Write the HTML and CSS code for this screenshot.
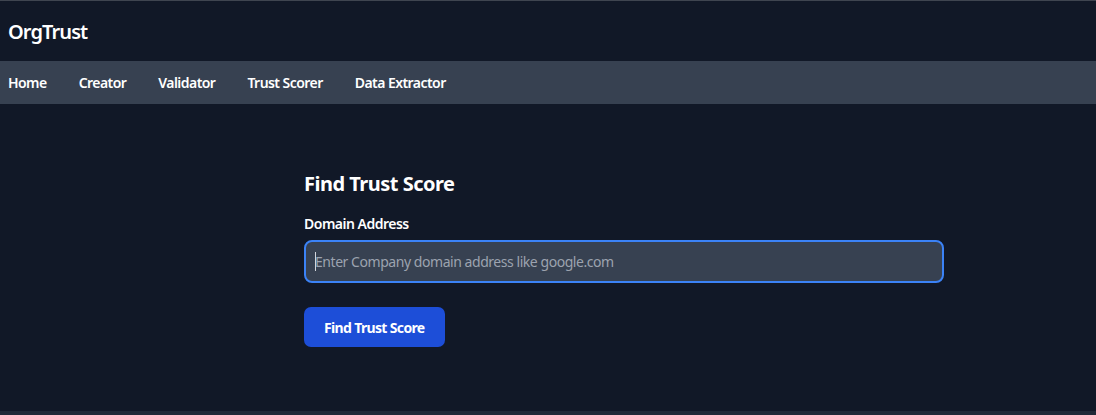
FILE: index.html
```html
<!DOCTYPE html>
<html lang="en">
<head>
<meta charset="utf-8">
<title>OrgTrust</title>
<link rel="stylesheet" href="styles.css">
</head>
<body>
<header class="topbar">
  <div class="brand">OrgTrust</div>
</header>
<nav class="nav">
  <a class="nav-link" href="#">Home</a>
  <a class="nav-link" href="#">Creator</a>
  <a class="nav-link" href="#">Validator</a>
  <a class="nav-link" href="#">Trust Scorer</a>
  <a class="nav-link" href="#">Data Extractor</a>
</nav>
<main class="main">
  <form class="form">
    <h2 class="title">Find Trust Score</h2>
    <label class="label" for="domain">Domain Address</label>
    <div class="field">
      <input class="input" id="domain" type="text" placeholder="Enter Company domain address like google.com">
    </div>
    <button class="btn" type="button">Find Trust Score</button>
  </form>
</main>
<footer class="footer"></footer>
</body>
</html>
```

FILE: styles.css
```css
* { box-sizing: border-box; }
html, body { margin: 0; padding: 0; }
body {
  background: #111827;
  color: #fff;
  font-family: "Noto Sans", "Open Sans", sans-serif;
  height: 415px;
  overflow: hidden;
  border-top: 1px solid #3f4550;
}
.topbar {
  height: 60px;
  display: flex;
  align-items: center;
  padding: 2px 8px 0;
}
.brand {
  font-size: 20px;
  font-weight: 600;
  line-height: 28px;
  letter-spacing: -0.9px;
}
.nav {
  background: #374151;
  height: 43px;
  display: flex;
  align-items: center;
  gap: 32px;
  padding: 0 8px;
}
.nav-link {
  color: #fff;
  text-decoration: none;
  font-size: 14px;
  font-weight: 600;
  line-height: 20px;
  letter-spacing: -0.55px;
}
.main {
  height: 307px;
  padding: 64px 0 0 304px;
}
.form {
  width: 640px;
  display: flex;
  flex-direction: column;
  align-items: flex-start;
}
.title {
  margin: 2px 0 16px;
  font-size: 20px;
  font-weight: 700;
  line-height: 28px;
  letter-spacing: -0.5px;
}
.label {
  font-size: 14px;
  font-weight: 600;
  line-height: 20px;
  margin-bottom: 6px;
  letter-spacing: -0.5px;
}
.field {
  position: relative;
  width: 100%;
}
.field::before {
  content: "";
  position: absolute;
  left: 11px;
  top: 12px;
  width: 1px;
  height: 19px;
  background: #d1d5db;
}
.input {
  width: 100%;
  height: 43px;
  background: #374151;
  border: 2px solid #3b82f6;
  border-radius: 8px;
  padding: 0 9px;
  color: #fff;
  font-family: inherit;
  font-size: 14px;
  letter-spacing: -0.45px;
  outline: none;
}
.input::placeholder { color: #9ca3af; }
.btn {
  margin-top: 24px;
  height: 40px;
  padding: 0 20px;
  background: #1d4ed8;
  color: #fff;
  border: none;
  border-radius: 7px;
  font-family: inherit;
  font-size: 14px;
  font-weight: 700;
  letter-spacing: -0.65px;
}
.footer {
  height: 10px;
  background: #1f2937;
}
```
